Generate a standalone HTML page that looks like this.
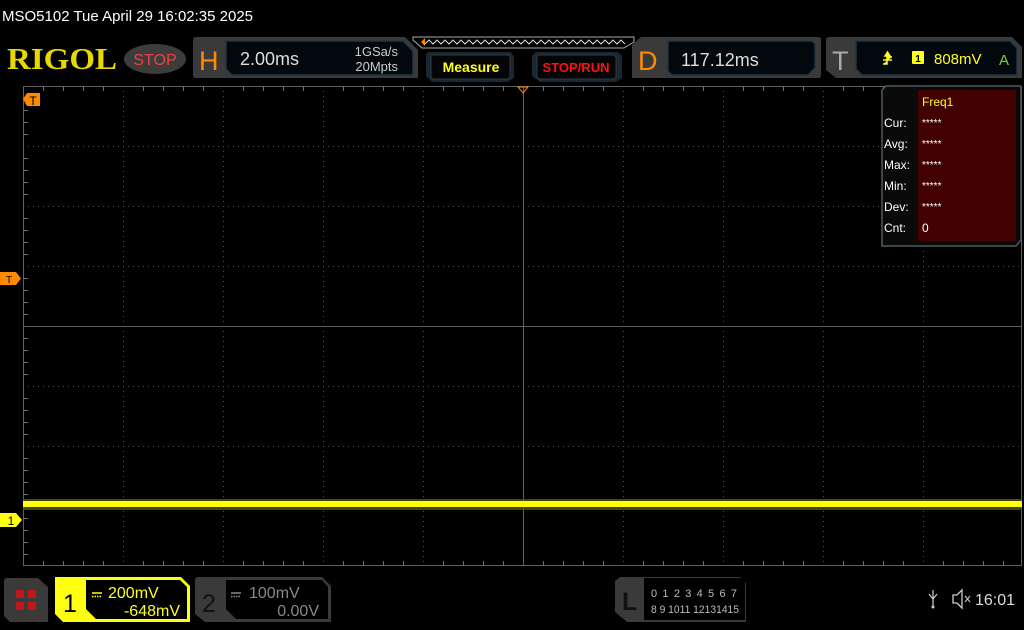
<!DOCTYPE html>
<html><head><meta charset="utf-8"><style>
html,body{margin:0;padding:0;background:#000;width:1024px;height:630px;overflow:hidden}
svg{display:block}
text{font-family:"Liberation Sans",sans-serif}
</style></head><body>
<svg width="1024" height="630" viewBox="0 0 1024 630" xmlns="http://www.w3.org/2000/svg">
<rect width="1024" height="630" fill="#000"/>
<text x="2" y="21" fill="#fff" font-size="15">MSO5102  Tue April 29 16:02:35 2025</text>
<!-- RIGOL -->
<text x="7" y="69" fill="#e8d800" font-size="31" font-weight="bold" style="font-family:'Liberation Serif',serif" textLength="110" lengthAdjust="spacingAndGlyphs">RIGOL</text>
<ellipse cx="155" cy="59" rx="31" ry="15" fill="#3c3c3c"/>
<text x="155" y="65" fill="#f04040" font-size="16" text-anchor="middle">STOP</text>
<!-- H panel -->
<path d="M193,40 Q193,37 196,37 L405,37 L418,50 L418,78 L196,78 Q193,78 193,75Z" fill="#3a3a3a"/>
<path d="M226,41 L403,41 L413,51 L413,75 L232,75 L226,69Z" fill="#03080d" stroke="#1c3646" stroke-width="1.5"/>
<text x="199" y="70" fill="#ff8a00" font-size="27">H</text>
<text x="240" y="65" fill="#ddd" font-size="18">2.00ms</text>
<text x="398" y="56" fill="#ccc" font-size="13" text-anchor="end">1GSa/s</text>
<text x="398" y="71" fill="#ccc" font-size="13" text-anchor="end">20Mpts</text>
<!-- wave bar -->
<path d="M413,37 L634,37 L634,42 L624,48 L422,48 L413,40Z" fill="none" stroke="#aaa" stroke-width="1"/>
<polyline points="425,44 429,40 433,44 437,40 441,44 445,40 449,44 453,40 457,44 461,40 465,44 469,40 473,44 477,40 481,44 485,40 489,44 493,40 497,44 501,40 505,44 509,40 513,44 517,40 521,44 525,40 529,44 533,40 537,44 541,40 545,44 549,40 553,44 557,40 561,44 565,40 569,44 573,40 577,44 581,40 585,44 589,40 593,44 597,40 601,44 605,40 609,44 613,40 617,44 621,40 625,44" fill="none" stroke="#ddd" stroke-width="1"/>
<path d="M421,42 L425,38 L425,46Z" fill="#ff8a00"/>
<!-- Measure -->
<path d="M428,52 L510,52 L514,56 L514,78 L508,82 L432,82 L426,76 L426,54Z" fill="#1a2630"/>
<rect x="431" y="55" width="79" height="24" rx="3" fill="#050505" stroke="#2c3c48"/>
<text x="471" y="72" fill="#ffff20" font-size="14" font-weight="bold" text-anchor="middle">Measure</text>
<!-- STOP/RUN -->
<path d="M536,52 L618,52 L622,56 L622,78 L616,82 L540,82 L532,76 L532,56Z" fill="#1a2630"/>
<rect x="537" y="55" width="79" height="24" rx="3" fill="#050505" stroke="#2c3c48"/>
<text x="576" y="72" fill="#ff1010" font-size="13" font-weight="bold" text-anchor="middle">STOP/RUN</text>
<!-- D panel -->
<path d="M632,45 L641,37 L818,37 Q821,37 821,40 L821,75 Q821,78 818,78 L632,78Z" fill="#3a3a3a"/>
<path d="M668,41 L812,41 L815,44 L815,68 L808,75 L672,75 L668,71Z" fill="#03080d" stroke="#1c3646" stroke-width="1.5"/>
<text x="638" y="70" fill="#ff8a00" font-size="27">D</text>
<text x="681" y="66" fill="#ddd" font-size="18">117.12ms</text>
<!-- T panel -->
<path d="M826,40 Q826,37 829,37 L1012,37 L1022,47 L1022,78 L836,78 L826,70Z" fill="#3a3a3a"/>
<path d="M856,41 L1010,41 L1017,48 L1017,75 L862,75 L856,69Z" fill="#03080d" stroke="#1c3646" stroke-width="1.5"/>
<text x="832" y="70" fill="#aaa" font-size="27">T</text>
<path d="M883,64 L887,64 L887,57 L892,57 M883,60 L892,60 M885,56 L887.5,52 L890,56Z" stroke="#ffff20" stroke-width="1.5" fill="#ffff20"/>
<rect x="912" y="51" width="12" height="13" rx="1" fill="#ffff20"/>
<text x="918" y="62" fill="#000" font-size="10" text-anchor="middle" font-weight="bold">1</text>
<text x="934" y="64" fill="#ffff20" font-size="15">808mV</text>
<text x="999" y="65" fill="#80d020" font-size="15">A</text>
<!-- Grid -->
<g stroke="#505050" stroke-width="1" stroke-dasharray="1 4">
<line x1="123.5" y1="86" x2="123.5" y2="566"/><line x1="223.5" y1="86" x2="223.5" y2="566"/>
<line x1="323.5" y1="86" x2="323.5" y2="566"/><line x1="423.5" y1="86" x2="423.5" y2="566"/>
<line x1="623.5" y1="86" x2="623.5" y2="566"/><line x1="723.5" y1="86" x2="723.5" y2="566"/>
<line x1="823.5" y1="86" x2="823.5" y2="566"/><line x1="923.5" y1="86" x2="923.5" y2="566"/>
<line x1="23" y1="146.5" x2="1022" y2="146.5"/><line x1="23" y1="206.5" x2="1022" y2="206.5"/>
<line x1="23" y1="266.5" x2="1022" y2="266.5"/><line x1="23" y1="386.5" x2="1022" y2="386.5"/>
<line x1="23" y1="446.5" x2="1022" y2="446.5"/><line x1="23" y1="506.5" x2="1022" y2="506.5"/>
</g>
<g stroke="#606060" stroke-width="1">
<line x1="523.5" y1="86" x2="523.5" y2="566"/><line x1="23" y1="326.5" x2="1022" y2="326.5"/>
<rect x="23.5" y="86.5" width="998" height="479" fill="none"/>
</g>
<g stroke="#707070" stroke-width="1">
<path d="M43.5,86v5M63.5,86v5M83.5,86v5M103.5,86v5M143.5,86v5M163.5,86v5M183.5,86v5M203.5,86v5M243.5,86v5M263.5,86v5M283.5,86v5M303.5,86v5M343.5,86v5M363.5,86v5M383.5,86v5M403.5,86v5M443.5,86v5M463.5,86v5M483.5,86v5M503.5,86v5M543.5,86v5M563.5,86v5M583.5,86v5M603.5,86v5M643.5,86v5M663.5,86v5M683.5,86v5M703.5,86v5M743.5,86v5M763.5,86v5M783.5,86v5M803.5,86v5M843.5,86v5M863.5,86v5M883.5,86v5M903.5,86v5M943.5,86v5M963.5,86v5M983.5,86v5M1003.5,86v5"/>
<path d="M43.5,566v-5M63.5,566v-5M83.5,566v-5M103.5,566v-5M143.5,566v-5M163.5,566v-5M183.5,566v-5M203.5,566v-5M243.5,566v-5M263.5,566v-5M283.5,566v-5M303.5,566v-5M343.5,566v-5M363.5,566v-5M383.5,566v-5M403.5,566v-5M443.5,566v-5M463.5,566v-5M483.5,566v-5M503.5,566v-5M543.5,566v-5M563.5,566v-5M583.5,566v-5M603.5,566v-5M643.5,566v-5M663.5,566v-5M683.5,566v-5M703.5,566v-5M743.5,566v-5M763.5,566v-5M783.5,566v-5M803.5,566v-5M843.5,566v-5M863.5,566v-5M883.5,566v-5M903.5,566v-5M943.5,566v-5M963.5,566v-5M983.5,566v-5M1003.5,566v-5"/>
<path d="M23,98.5h5M23,110.5h5M23,122.5h5M23,134.5h5M23,158.5h5M23,170.5h5M23,182.5h5M23,194.5h5M23,218.5h5M23,230.5h5M23,242.5h5M23,254.5h5M23,278.5h5M23,290.5h5M23,302.5h5M23,314.5h5M23,338.5h5M23,350.5h5M23,362.5h5M23,374.5h5M23,398.5h5M23,410.5h5M23,422.5h5M23,434.5h5M23,458.5h5M23,470.5h5M23,482.5h5M23,494.5h5M23,518.5h5M23,530.5h5M23,542.5h5M23,554.5h5"/>
</g>
<path d="M518,87 L528,87 L523,93Z" fill="none" stroke="#ff8a00"/>
<!-- trace -->
<rect x="23" y="499" width="999" height="11" fill="#5a5a00" opacity="0.8"/>
<rect x="23" y="501" width="999" height="6" fill="#ffff10"/>
<!-- markers -->
<path d="M23,99 L27,93 L40,93 L40,106 L27,106Z" fill="#ff8a00"/>
<text x="33" y="105" fill="#000" font-size="12" text-anchor="middle">T</text>
<path d="M0,272 L16,272 L21,278.5 L16,285 L0,285Z" fill="#ff8a00"/>
<text x="9" y="283" fill="#000" font-size="10" text-anchor="middle">T</text>
<path d="M0,513 L16,513 L22,520 L16,527 L0,527Z" fill="#ffff10"/>
<text x="11" y="525" fill="#000" font-size="12" text-anchor="middle">1</text>
<!-- measurement panel -->
<path d="M886,86 L1020,86 L1021,87 L1021,240 L1016,246 L882,246 L882,90Z" fill="#0a0a0a" stroke="#4a5a60" stroke-width="1.5"/>
<rect x="918" y="90" width="98" height="151" fill="#420000"/>
<text x="922" y="106" fill="#ffff20" font-size="12">Freq1</text>
<g fill="#fff" font-size="12"><text x="884" y="127">Cur:</text><text x="884" y="148">Avg:</text><text x="884" y="169">Max:</text><text x="884" y="190">Min:</text><text x="884" y="211">Dev:</text><text x="884" y="232">Cnt:</text>
<g font-size="10"><text x="922" y="126">*****</text><text x="922" y="147">*****</text><text x="922" y="168">*****</text><text x="922" y="189">*****</text><text x="922" y="210">*****</text></g>
<text x="922" y="232">0</text></g>
<!-- bottom -->
<path d="M6,578 L38,578 L48,587 L48,622 L10,622 L4,616 L4,580Z" fill="#3a3a3a"/>
<g fill="#c01818"><rect x="16" y="590" width="8" height="8"/><rect x="28" y="590" width="8" height="8"/><rect x="16" y="602" width="8" height="8"/><rect x="28" y="602" width="8" height="8"/></g>
<path d="M55,577 L181,577 L190,586 L190,622 L63,622 L55,614Z" fill="#ffff10"/>
<path d="M86,580 L180,580 L187,587 L187,619 L96,619 L86,609Z" fill="#000"/>
<text x="63" y="612" fill="#000" font-size="25">1</text>
<path d="M92,593 h10" stroke="#ffff10" stroke-width="1.5"/><path d="M92,596.5 h10" stroke="#ffff10" stroke-width="1.5" stroke-dasharray="1.5 1"/>
<text x="108" y="598" fill="#ffff20" font-size="16">200mV</text>
<text x="180" y="616" fill="#ffff20" font-size="16" text-anchor="end">-648mV</text>
<path d="M197,577 L322,577 L331,586 L331,622 L205,622 L195,614 L195,579Z" fill="#3a3a3a"/>
<path d="M226,580 L322,580 L328,587 L328,619 L236,619 L226,609Z" fill="#000"/>
<text x="202" y="612" fill="#111" font-size="25">2</text>
<path d="M231,593 h10" stroke="#888" stroke-width="1.5"/><path d="M231,596.5 h10" stroke="#888" stroke-width="1.5" stroke-dasharray="1.5 1"/>
<text x="249" y="598" fill="#888" font-size="16">100mV</text>
<text x="319" y="616" fill="#888" font-size="16" text-anchor="end">0.00V</text>
<path d="M620,577 L740,577 L746,583 L746,622 L627,622 L615,612 L615,581Z" fill="#3a3a3a"/>
<rect x="644" y="578" width="101" height="42" fill="#000"/>
<text x="622" y="610" fill="#111" font-size="25" font-weight="bold">L</text>
<g fill="#bbb" font-size="11"><text x="651" y="597" textLength="86" lengthAdjust="spacing">0 1 2 3  4 5 6 7</text><text x="651" y="613" textLength="88" lengthAdjust="spacingAndGlyphs">8 9 1011 12131415</text></g>
<path d="M933,590 v17 M929,594 l4,5 l4,-5" stroke="#ccc" fill="none" stroke-width="1.2"/><circle cx="933" cy="607" r="1.5" fill="#ccc"/>
<path d="M953,595 L957,595 L962,590 L962,608 L957,603 L953,603Z" fill="none" stroke="#ccc" stroke-width="1.3"/>
<path d="M965,596 l5,6 M970,596 l-5,6" stroke="#ccc" stroke-width="1"/>
<text x="975" y="605" fill="#ddd" font-size="16">16:01</text>
</svg>
</body></html>
